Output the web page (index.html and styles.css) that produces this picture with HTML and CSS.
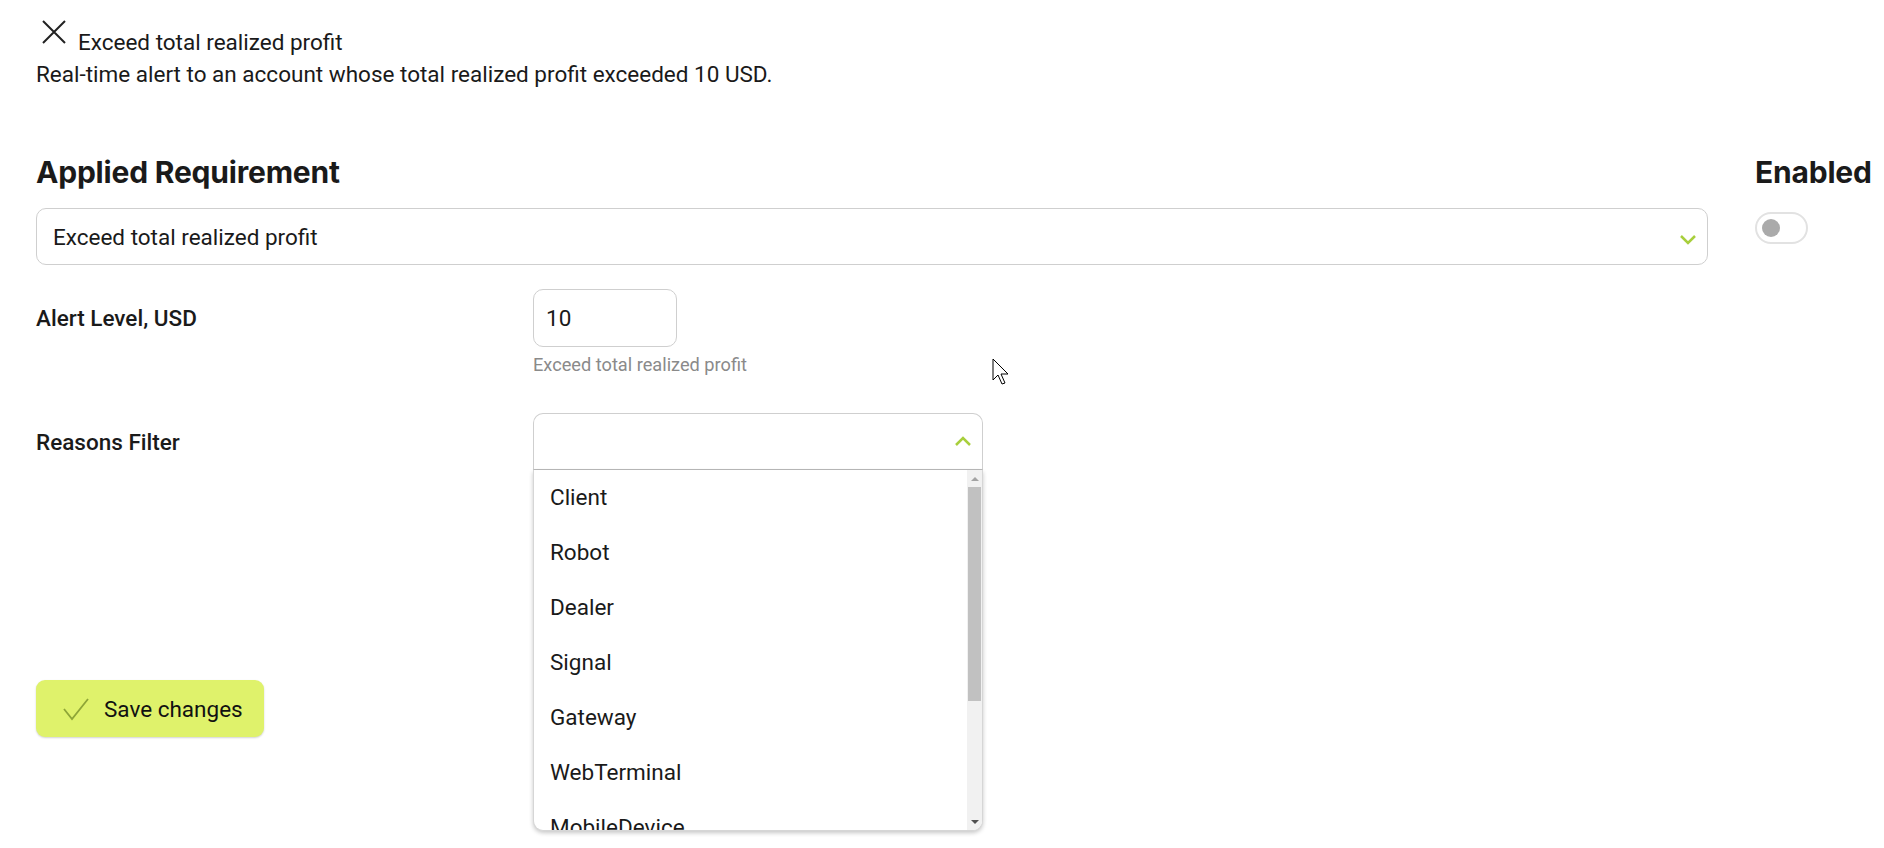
FILE: index.html
```html
<!DOCTYPE html>
<html lang="en">
<head>
    <meta charset="UTF-8">
    <meta name="viewport" content="width=device-width, initial-scale=1.0">
    <title>Exceed total realized profit</title>
    <link rel="stylesheet" href="styles.css">
</head>
<body>

    <div class="page">

        <div class="titleRow">
            <svg class="closeIcon" width="24" height="24" viewBox="0 0 24 24">
                <path d="M1 1 L23 23 M23 1 L1 23" stroke="#222" stroke-width="2" fill="none"/>
            </svg>
            <span class="title">Exceed total realized profit</span>
        </div>
        <p class="description">Real-time alert to an account whose total realized profit exceeded 10 USD.</p>

        <div class="requirement">
            <div class="requirementMain">
                <h2 class="heading">Applied Requirement</h2>
                <div class="select">
                    <span>Exceed total realized profit</span>
                    <svg class="chevron" width="18" height="11" viewBox="0 0 18 11">
                        <path d="M2 2 L9 9 L16 2" stroke="#a8cf3c" stroke-width="2.5" fill="none"/>
                    </svg>
                </div>
            </div>
            <div class="requirementSide">
                <h2 class="heading">Enabled</h2>
                <div class="toggle"><span class="knob"></span></div>
            </div>
        </div>

        <div class="field">
            <label class="fieldLabel">Alert Level, USD</label>
            <div class="fieldControl">
                <input class="numberInput" type="text" value="10">
            </div>
        </div>
        <div class="hint">Exceed total realized profit</div>

        <div class="field reasons">
            <label class="fieldLabel">Reasons Filter</label>
            <div class="fieldControl multiselect">
                <div class="multiselectBox">
                    <svg class="chevron" width="18" height="11" viewBox="0 0 18 11">
                        <path d="M2 9 L9 2 L16 9" stroke="#a8cf3c" stroke-width="2.5" fill="none"/>
                    </svg>
                </div>
                <div class="optionsPanel">
                    <ul class="options">
                        <li>Client</li>
                        <li>Robot</li>
                        <li>Dealer</li>
                        <li>Signal</li>
                        <li>Gateway</li>
                        <li>WebTerminal</li>
                        <li>MobileDevice</li>
                        <li>StopLoss</li>
                        <li>TakeProfit</li>
                        <li>StopOut</li>
                    </ul>
                    <div class="scrollbar">
                        <span class="arrow up"></span>
                        <span class="thumb"></span>
                        <span class="spacer"></span>
                        <span class="arrow down"></span>
                    </div>
                </div>
            </div>
        </div>

        <button class="saveButton">
            <svg width="28" height="24" viewBox="0 0 28 24">
                <path d="M2 12 L10 22 L26 2" stroke="#8ea537" stroke-width="1.8" fill="none"/>
            </svg>
            Save changes
        </button>

        <svg class="cursor" width="18" height="28" viewBox="0 0 18 28">
            <path d="M1 1 L1 22 L6 17 L10 26 L13 25 L9 16 L16 16 Z" fill="#fff" stroke="#000" stroke-width="1"/>
        </svg>
    </div>

</body>
</html>
```

FILE: styles.css
```css
body {
    margin:             0;
    background-color:   #fff;
    color:              #1a1a1a;
    font-family:        Roboto, "Liberation Sans", sans-serif;
}

.page {
    position:           relative;
    padding:            20px 16px 0 36px;
    min-height:         828px;
}

.titleRow {
    display:            flex;
    align-items:        flex-end;
    gap:                12px;
    padding-left:       6px;
}

.closeIcon              { margin-bottom: 11px; }

.title {
    font-size:          22.5px;
    line-height:        26px;
}

.description {
    margin:             6px 0 0 0;
    font-size:          22.5px;
    line-height:        26px;
}

.requirement {
    display:            flex;
    gap:                47px;
    margin-top:         67px;
}

.requirementMain        { flex: 1; }
.requirementSide        { width: 113px; }

.heading {
    margin:             0;
    font-family:        Inter, sans-serif;
    font-weight:        700;
    font-size:          30px;
    line-height:        36px;
    letter-spacing:     -0.2px;
}

.select {
    display:            flex;
    align-items:        center;
    justify-content:    space-between;
    height:             57px;
    box-sizing:         border-box;
    margin-top:         18px;
    padding:            0 10px 0 16px;
    border:             1px solid #cfcfcf;
    border-radius:      10px;
    font-size:          22.5px;
}

.select .chevron        { margin-top: 6px; }

.toggle {
    width:              53px;
    height:             32px;
    box-sizing:         border-box;
    margin-top:         22px;
    border:             2px solid #e2e2e2;
    border-radius:      16px;
    display:            flex;
    align-items:        center;
    padding-left:       5px;
}

.knob {
    width:              18px;
    height:             18px;
    border-radius:      50%;
    background-color:   #aaa;
}

.field {
    display:            grid;
    grid-template-columns: 497px auto;
    align-items:        center;
    margin-top:         24px;
}

.fieldLabel {
    font-size:          22.5px;
    font-weight:        500;
}

.numberInput {
    width:              144px;
    height:             58px;
    box-sizing:         border-box;
    padding:            0 12px;
    border:             1px solid #cfcfcf;
    border-radius:      10px;
    font-family:        Roboto, sans-serif;
    font-size:          22.5px;
    color:              #1a1a1a;
    outline:            none;
}

.hint {
    margin:             8px 0 0 497px;
    font-size:          18.2px;
    line-height:        20px;
    color:              #8a8a8a;
}

.reasons                { margin-top: 38px; }

.multiselect {
    position:           relative;
    width:              450px;
}

.multiselectBox {
    display:            flex;
    align-items:        center;
    justify-content:    flex-end;
    height:             57px;
    box-sizing:         border-box;
    padding-right:      10px;
    border:             1px solid #cfcfcf;
    border-bottom-color: #bbb;
    border-radius:      10px 10px 0 0;
}

.optionsPanel {
    position:           absolute;
    top:                57px;
    left:               0;
    right:              0;
    height:             361px;
    box-sizing:         border-box;
    display:            flex;
    overflow:           hidden;
    background-color:   #fff;
    border:             1px solid #d6d6d6;
    border-top:         none;
    border-radius:      0 0 10px 10px;
    box-shadow:         0 2px 4px rgba(0, 0, 0, 0.22);
    z-index:            2;
}

.options {
    flex:               1;
    margin:             0;
    padding:            0;
    list-style:         none;
    overflow:           hidden;
}

.options li {
    height:             55px;
    line-height:        55px;
    padding-left:       16px;
    font-size:          22.5px;
}

.scrollbar {
    width:              15px;
    display:            flex;
    flex-direction:     column;
    background-color:   #f1f1f1;
}

.arrow {
    height:             17px;
    display:            flex;
    align-items:        center;
    justify-content:    center;
}

.arrow::before {
    content:            "";
    border-left:        4px solid transparent;
    border-right:       4px solid transparent;
}

.arrow.up::before       { border-bottom: 4px solid #a3a3a3; }
.arrow.down::before     { border-top: 4px solid #505050; }

.thumb {
    height:             214px;
    margin:             0 1px;
    background-color:   #c1c1c1;
}

.spacer                 { flex: 1; }

.saveButton {
    display:            flex;
    align-items:        center;
    gap:                14px;
    width:              228px;
    height:             57px;
    margin-top:         210px;
    padding:            0 0 0 26px;
    border:             none;
    border-radius:      9px;
    background-color:   #dff26b;
    box-shadow:         0 1px 2px rgba(0, 0, 0, 0.18);
    font-family:        Roboto, sans-serif;
    font-size:          22.5px;
    color:              #111;
}

.cursor {
    position:           absolute;
    left:               992px;
    top:                358px;
}
```
